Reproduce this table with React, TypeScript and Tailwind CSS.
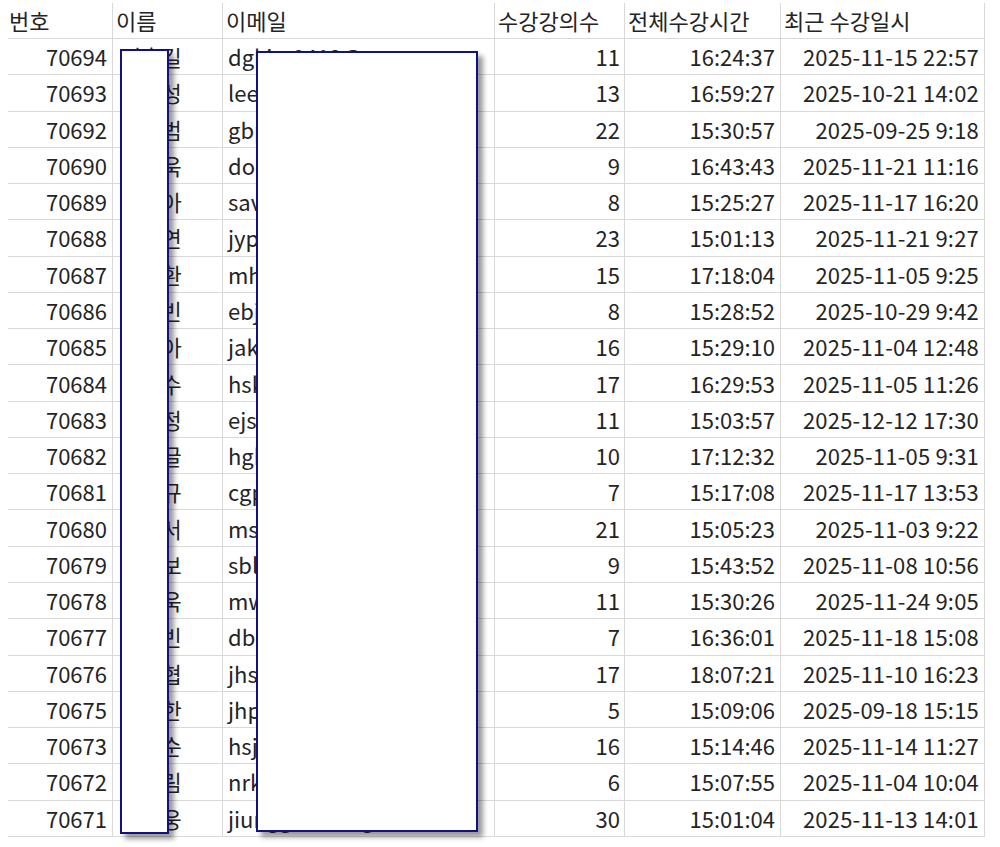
import React from 'react';

// Spreadsheet export of recent learners (name / email columns are masked)
const ROWS = [
  { id: 70694, name: '이홍길', email: 'dgkim0412@naver.com', count: 11, total: '16:24:37', last: '2025-11-15 22:57' },
  { id: 70693, name: '이민성', email: 'leems88@gmail.com', count: 13, total: '16:59:27', last: '2025-10-21 14:02' },
  { id: 70692, name: '박기범', email: 'gbpark77@daum.net', count: 22, total: '15:30:57', last: '2025-09-25 9:18' },
  { id: 70690, name: '최도욱', email: 'docw1203@naver.com', count: 9, total: '16:43:43', last: '2025-11-21 11:16' },
  { id: 70689, name: '정사아', email: 'savina22@gmail.com', count: 8, total: '15:25:27', last: '2025-11-17 16:20' },
  { id: 70688, name: '윤지연', email: 'jyp0915@naver.com', count: 23, total: '15:01:13', last: '2025-11-21 9:27' },
  { id: 70687, name: '한명환', email: 'mhhan@kakao.com', count: 15, total: '17:18:04', last: '2025-11-05 9:25' },
  { id: 70686, name: '오은빈', email: 'ebjoh21@gmail.com', count: 8, total: '15:28:52', last: '2025-10-29 9:42' },
  { id: 70685, name: '장가아', email: 'jakang93@naver.com', count: 16, total: '15:29:10', last: '2025-11-04 12:48' },
  { id: 70684, name: '홍성수', email: 'hskhong@gmail.com', count: 17, total: '16:29:53', last: '2025-11-05 11:26' },
  { id: 70683, name: '임은정', email: 'ejslim0707@naver.com', count: 11, total: '15:03:57', last: '2025-12-12 17:30' },
  { id: 70682, name: '강한글', email: 'hgkang@daum.net', count: 10, total: '17:12:32', last: '2025-11-05 9:31' },
  { id: 70681, name: '조창규', email: 'cgpjo12@gmail.com', count: 7, total: '15:17:08', last: '2025-11-17 13:53' },
  { id: 70680, name: '문서서', email: 'msmoon55@naver.com', count: 21, total: '15:05:23', last: '2025-11-03 9:22' },
  { id: 70679, name: '서보보', email: 'sblseo@gmail.com', count: 9, total: '15:43:52', last: '2025-11-08 10:56' },
  { id: 70678, name: '민재욱', email: 'mwvmin@naver.com', count: 11, total: '15:30:26', last: '2025-11-24 9:05' },
  { id: 70677, name: '배다빈', email: 'dbbae03@gmail.com', count: 7, total: '16:36:01', last: '2025-11-18 15:08' },
  { id: 70676, name: '신재협', email: 'jhshin@kakao.com', count: 17, total: '18:07:21', last: '2025-11-10 16:23' },
  { id: 70675, name: '황정한', email: 'jhpark99@naver.com', count: 5, total: '15:09:06', last: '2025-09-18 15:15' },
  { id: 70673, name: '허선순', email: 'hsjheo@gmail.com', count: 16, total: '15:14:46', last: '2025-11-14 11:27' },
  { id: 70672, name: '노가림', email: 'nrkno21@naver.com', count: 6, total: '15:07:55', last: '2025-11-04 10:04' },
  { id: 70671, name: '권지웅', email: 'jiungg0219@gmail.com', count: 30, total: '15:01:04', last: '2025-11-13 14:01' },
];

const HEADERS = ['번호', '이름', '이메일', '수강강의수', '전체수강시간', '최근 수강일시'];

const cell = 'h-[36.27px] border-r border-b border-[#d9d9d9] flex items-center whitespace-nowrap overflow-hidden';

export default function App() {
  return (
    <div
      className="relative w-[1000px] h-[847px] overflow-hidden bg-white text-[22px] text-[#242424]"
      style={{ fontFamily: '"Noto Sans CJK KR", "Noto Sans", sans-serif' }}
    >
      <div className="pl-[8px] pt-[3px]">
        <div className="grid grid-cols-[105px_110px_272px_130px_156px_204px] w-[977px]">
          {HEADERS.map((h, i) => (
            <div key={h} className={`${cell} h-[36px] ${i === 0 ? 'pl-[1px]' : 'pl-[3px]'}`}>
              {h}
            </div>
          ))}
          {ROWS.map((r) => (
            <React.Fragment key={r.id}>
              <div className={`${cell} justify-end pr-[5px]`}>{r.id}</div>
              <div className={`${cell} pl-[8px]`}>{r.name}</div>
              <div className={`${cell} pl-[5px]`}>{r.email}</div>
              <div className={`${cell} justify-end pr-[4px]`}>{r.count}</div>
              <div className={`${cell} justify-end pr-[5px]`}>{r.total}</div>
              <div className={`${cell} justify-end pr-[5px] tracking-[0.2px]`}>{r.last}</div>
            </React.Fragment>
          ))}
        </div>
      </div>

      {/* masking boxes */}
      <div className="absolute left-[120px] top-[49px] w-[49px] h-[785px] bg-white border-2 border-[#12127e] shadow-[5px_5px_5px_rgba(0,0,0,0.4)]" />
      <div className="absolute left-[256px] top-[51px] w-[222px] h-[781px] bg-white border-2 border-[#12127e] shadow-[5px_5px_5px_rgba(0,0,0,0.4)]" />
    </div>
  );
}
